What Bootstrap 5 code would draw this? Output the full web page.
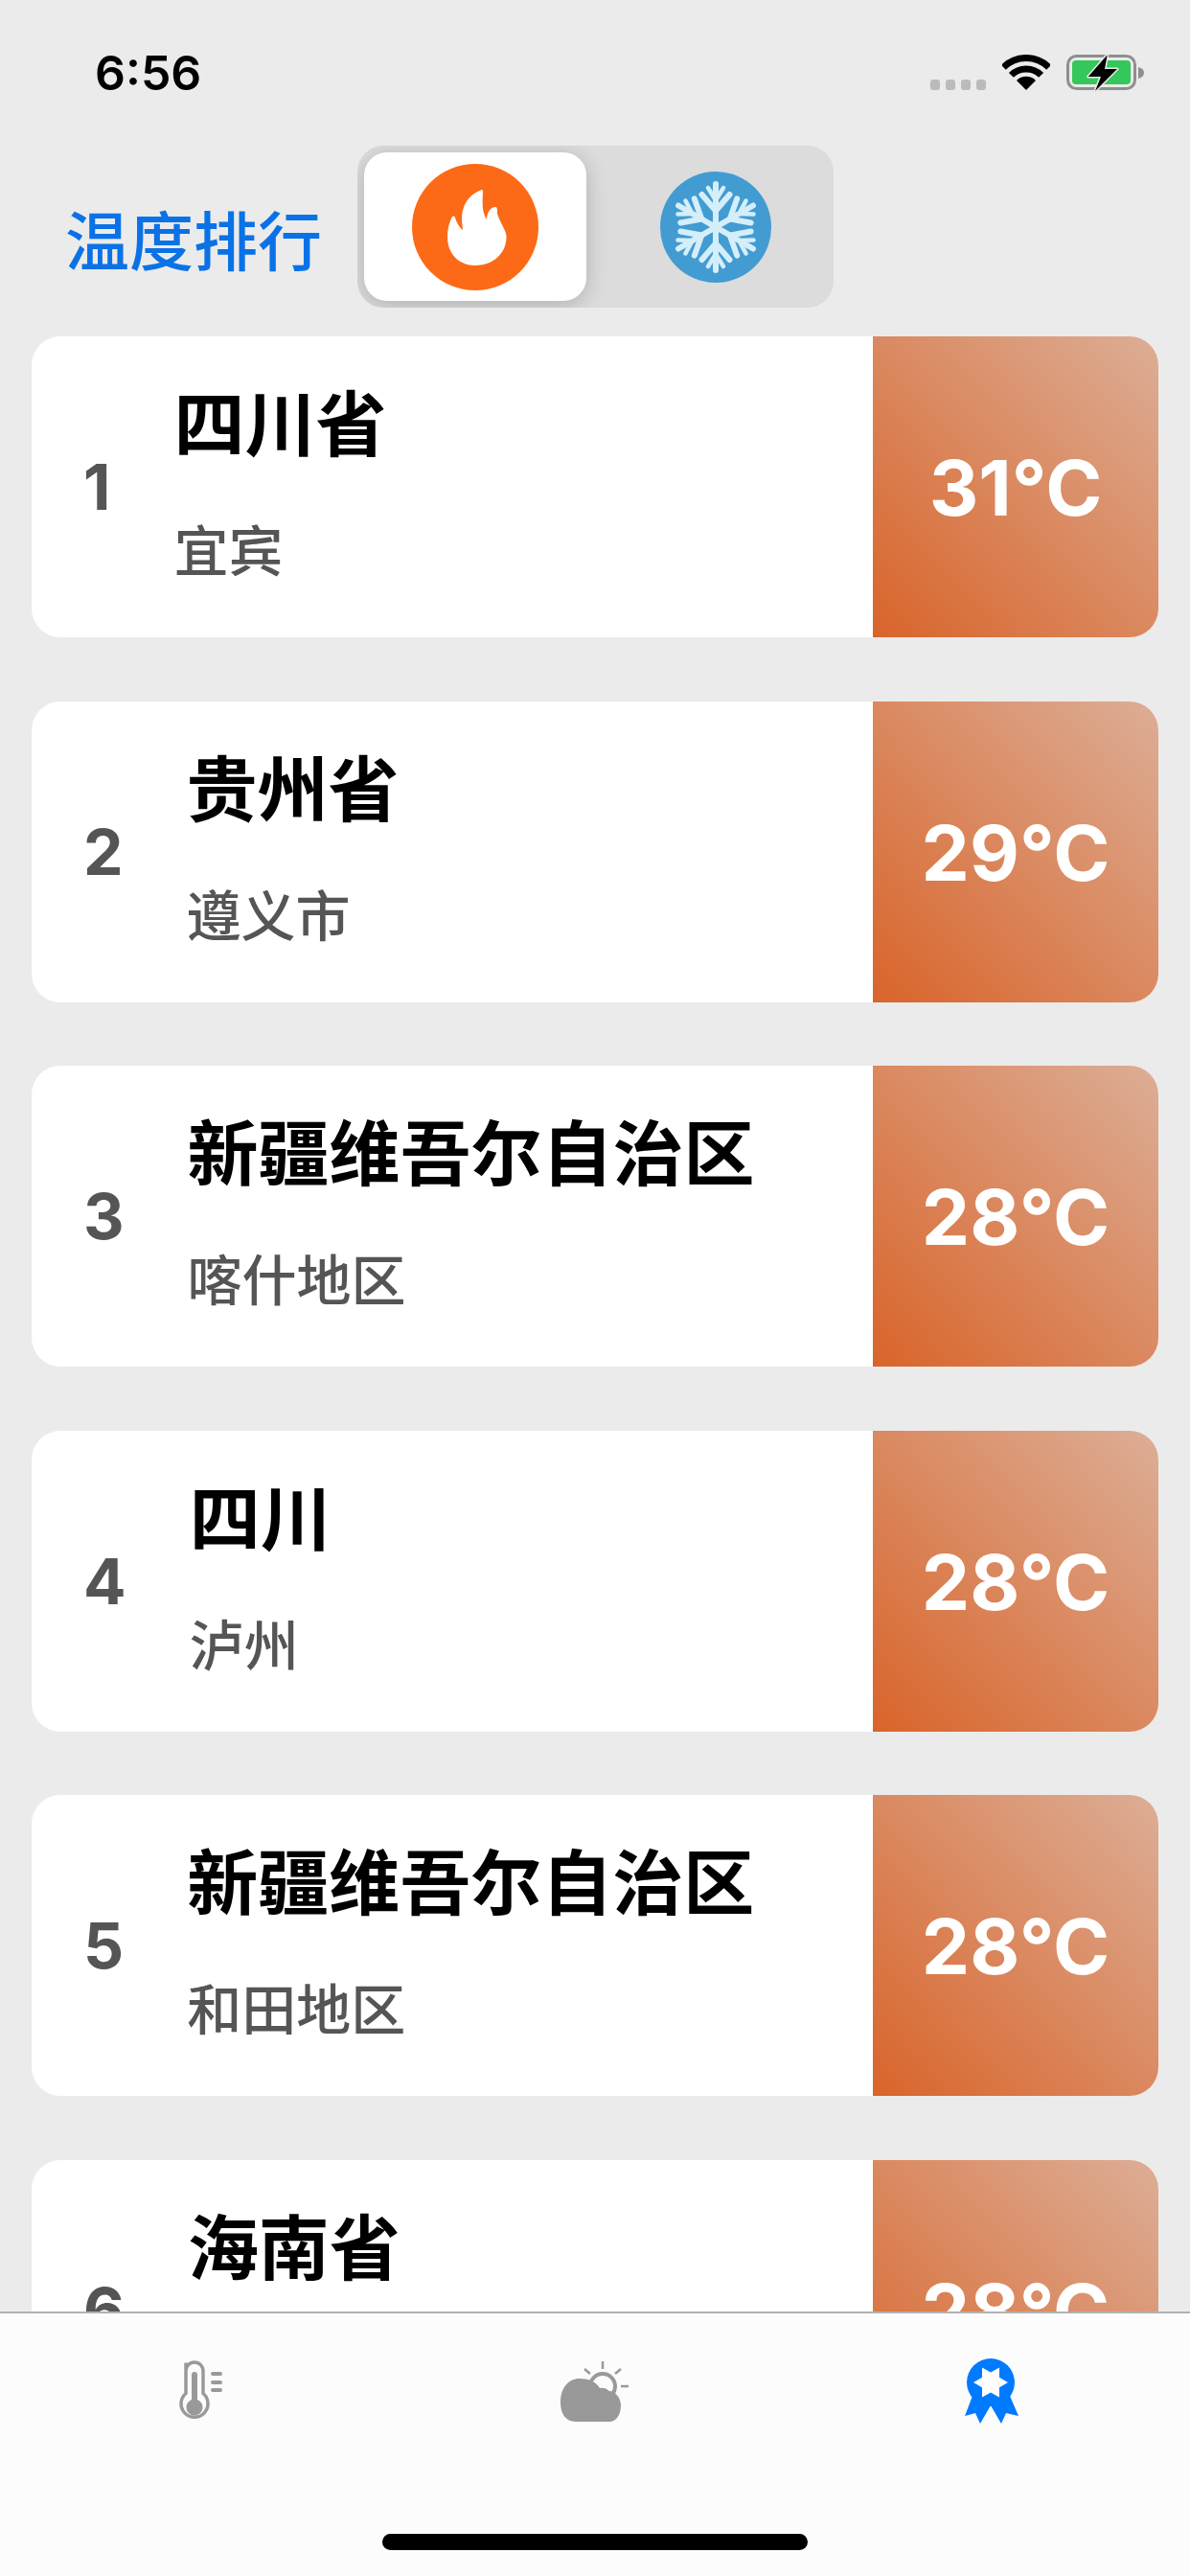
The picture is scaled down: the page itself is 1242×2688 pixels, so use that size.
<!DOCTYPE html>
<html lang="zh">
<head>
<meta charset="utf-8">
<title>温度排行</title>
<link href="https://cdn.jsdelivr.net/npm/bootstrap@5.3.0/dist/css/bootstrap.min.css" rel="stylesheet">
<style>
html,body{margin:0;height:2688px;overflow:hidden;background:#ebebeb;}
body{font-family:Inter,"Noto Sans CJK SC",sans-serif;}
.app-shell{width:1242px;height:2688px;}
.status-row{height:152px;padding:0 47px 0 99px;flex:none;}
.clock{font-size:50px;font-weight:600;line-height:1;margin-top:51px;color:#000;}
.status-icons{padding-top:56px;}
.sig-dots{gap:6px;margin-top:27px;margin-right:17px;}
.sig-dots span{width:10px;height:11px;border-radius:3px;background:#bbb;}
.wifi-ic{margin-top:1px;margin-right:17px;}
.head-row{height:199px;flex:none;padding:0 0 0 68px;}
.page-name{font-family:"Noto Sans CJK SC",sans-serif;font-size:67px;font-weight:500;line-height:66px;color:#0a72e6;width:305px;margin-top:63px;white-space:nowrap;}
.seg-box{width:497px;height:169px;padding:7px;background:#dcdcdc;border-radius:27px;overflow:hidden;}
.seg-on{width:232px;height:155px;background:#fff;border-radius:24px;box-shadow:0 4px 22px rgba(0,0,0,.2);}
.seg-off{height:155px;padding-left:19px;}
.list-area{padding:0 33px;gap:66.6px;min-height:0;overflow:hidden;}
.rank-card{height:314px;flex:none;border-radius:30px;border:0;overflow:hidden;background:#fff;}
.rank-no{font-size:66px;font-weight:700;color:#555;line-height:1;margin-left:54px;margin-right:66px;}
.name-box{padding-top:51px;font-family:"Noto Sans CJK SC",sans-serif;}
.place{font-size:74px;font-weight:700;line-height:72px;color:#000;white-space:nowrap;}
.sub-place{font-size:57px;font-weight:500;line-height:60px;color:#555;margin-top:67px;white-space:nowrap;}
.temp-box{width:298px;background:linear-gradient(to top right,#d9642a,#dcae96);color:#fff;font-size:80px;font-weight:700;padding-top:2px;}
.tab-strip{height:276px;flex:none;background:#fcfcfc;border-top:2px solid #b2b2b2;padding-top:41px;}
.home-bar{width:444px;height:17px;border-radius:9px;background:#000;margin:109px auto 0;}
</style>
</head>
<body>
<div class="app-shell d-flex flex-column">
  <div class="status-row d-flex justify-content-between">
    <div class="clock">6:56</div>
    <div class="status-icons d-flex align-items-start">
      <div class="sig-dots d-flex"><span></span><span></span><span></span><span></span></div>
      <svg class="wifi-ic" width="50" height="37" viewBox="0 0 50 37"><path d="M1.3 13.3A33.5 33.5 0 0 1 48.7 13.3" fill="none" stroke="#000" stroke-width="7"/><path d="M9.4 21.4A22 22 0 0 1 40.6 21.4" fill="none" stroke="#000" stroke-width="7"/><path d="M25 37L15 27A14 14 0 0 1 35 27Z"/></svg>
      <svg width="82" height="42" viewBox="0 0 82 42"><rect x="1.5" y="2.5" width="70" height="34" rx="9" fill="none" stroke="#8f8f8f" stroke-width="3"/><rect x="6" y="7" width="61" height="25" rx="4" fill="#34c759"/><path d="M75 14C79 15 81 17 81 20C81 23 79 25 75 26Z" fill="#8f8f8f"/><path d="M42.7 1.3L22.7 24H36L30 39L53 16H40Z" stroke="#ebebeb" stroke-width="3" paint-order="stroke" stroke-linejoin="round"/></svg>
    </div>
  </div>
  <div class="head-row d-flex align-items-start">
    <div class="page-name">温度排行</div>
    <div class="seg-box d-flex">
      <div class="seg-on d-flex align-items-center justify-content-center">
        <svg width="132" height="132" viewBox="0 0 132 132"><circle cx="66" cy="66" r="66" fill="#fc6a17"/><path fill="#fff" d="M73 27C62 31 52 40 52 58C52 62 53 66 53 69C49 66 46 60 45 56C44 54 42 54 41 57C38 63 37 70 37 76C37 95 50 106 66 106C84 106 98.5 94 98.5 76C98.5 69 92 62 89 52C89 47 89 45 87 45C82 45 78 51 78 58C74 52 73 44 74 30C74 28 74 27 73 27Z"/></svg>
      </div>
      <div class="seg-off flex-grow-1 d-flex align-items-center justify-content-center">
        <svg width="116" height="116" viewBox="0 0 116 116"><circle cx="58" cy="58" r="58" fill="#429cd2"/><defs><g id="flake-arm" fill="none" stroke="#d4eefa" stroke-linecap="round"><path d="M58 58V13" stroke-width="6"/><path d="M58 41L43.5 24M58 41L72.5 24" stroke-width="6"/><path d="M58 30L50 17M58 30L66 17" stroke-width="4.5"/></g></defs><use href="#flake-arm"/><use href="#flake-arm" transform="rotate(60 58 58)"/><use href="#flake-arm" transform="rotate(120 58 58)"/><use href="#flake-arm" transform="rotate(180 58 58)"/><use href="#flake-arm" transform="rotate(240 58 58)"/><use href="#flake-arm" transform="rotate(300 58 58)"/></svg>
      </div>
    </div>
  </div>
  <div class="list-area flex-grow-1 d-flex flex-column">
    <div class="rank-card card flex-row align-items-center"><div class="rank-no">1</div><div class="name-box flex-grow-1 align-self-start"><div class="place">四川省</div><div class="sub-place">宜宾</div></div><div class="temp-box align-self-stretch d-flex align-items-center justify-content-center">31°C</div></div>
    <div class="rank-card card flex-row align-items-center"><div class="rank-no">2</div><div class="name-box flex-grow-1 align-self-start"><div class="place">贵州省</div><div class="sub-place">遵义市</div></div><div class="temp-box align-self-stretch d-flex align-items-center justify-content-center">29°C</div></div>
    <div class="rank-card card flex-row align-items-center"><div class="rank-no">3</div><div class="name-box flex-grow-1 align-self-start"><div class="place">新疆维吾尔自治区</div><div class="sub-place">喀什地区</div></div><div class="temp-box align-self-stretch d-flex align-items-center justify-content-center">28°C</div></div>
    <div class="rank-card card flex-row align-items-center"><div class="rank-no">4</div><div class="name-box flex-grow-1 align-self-start"><div class="place">四川</div><div class="sub-place">泸州</div></div><div class="temp-box align-self-stretch d-flex align-items-center justify-content-center">28°C</div></div>
    <div class="rank-card card flex-row align-items-center"><div class="rank-no">5</div><div class="name-box flex-grow-1 align-self-start"><div class="place">新疆维吾尔自治区</div><div class="sub-place">和田地区</div></div><div class="temp-box align-self-stretch d-flex align-items-center justify-content-center">28°C</div></div>
    <div class="rank-card card flex-row align-items-center"><div class="rank-no">6</div><div class="name-box flex-grow-1 align-self-start"><div class="place">海南省</div></div><div class="temp-box align-self-stretch d-flex align-items-center justify-content-center">28°C</div></div>
  </div>
  <div class="tab-strip">
    <div class="row g-0 text-center">
      <div class="col-4"><svg width="80" height="80" viewBox="0 0 80 80"><path d="M27 10.5V42.5A14 14 0 1 0 45 42.5V19A9 9 0 0 0 27 19Z" fill="none" stroke="#999" stroke-width="3.5"/><path d="M33 23V49A8.5 8.5 0 1 0 39 49V23A3 3 0 0 0 33 23Z" fill="#999"/><path d="M55 22H63M55 31H63M55 39H63" stroke="#999" stroke-width="4" stroke-linecap="round"/></svg></div>
      <div class="col-4"><svg width="80" height="80" viewBox="0 0 80 80"><circle cx="48" cy="35" r="13" fill="#fcfcfc" stroke="#999" stroke-width="4"/><path d="M48 9V17M29 17L35 22M67 17L61 22M67 35H75" stroke="#999" stroke-width="2.5" fill="none"/><path fill="#999" d="M20 72C9 72 4 63 4 52C4 37 12 27 24 27C33 27 41 30 45 37C48 36 52 37 55 40C60 40 67 46 67 55C67 65 62 72 55 72Z"/></svg></div>
      <div class="col-4"><svg width="80" height="80" viewBox="0 0 80 80"><path fill="#007aff" d="M20 45L12 66L23 63L28 74L39 55L50 74L55 63L68 66L59 45Z"/><circle cx="39" cy="31" r="25" fill="#007aff"/><polygon fill="#fff" points="57,31 48,36.2 48,46.6 39,41.4 30,46.6 30,36.2 21,31 30,25.8 30,15.4 39,20.6 48,15.4 48,25.8"/></svg></div>
    </div>
    <div class="home-bar"></div>
  </div>
</div>
<script src="https://cdn.jsdelivr.net/npm/bootstrap@5.3.0/dist/js/bootstrap.bundle.min.js"></script>
</body>
</html>
